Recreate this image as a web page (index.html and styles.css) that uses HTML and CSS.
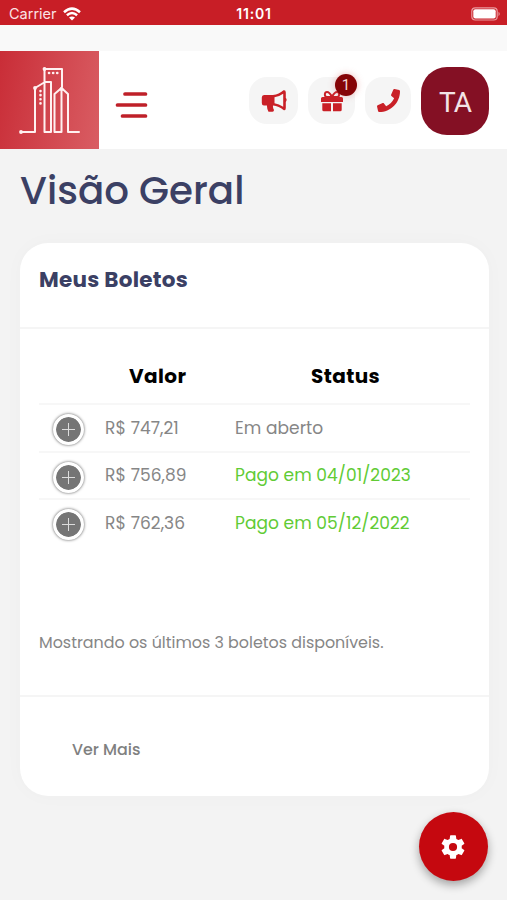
FILE: index.html
```html
<!DOCTYPE html>
<html lang="pt-BR">
<head>
<meta charset="utf-8">
<meta name="viewport" content="width=device-width, initial-scale=1">
<title>Visão Geral</title>
<link rel="stylesheet" href="styles.css">
</head>
<body>
<div class="status">
  <div class="carrier"><span>Carrier</span>
    <svg width="18" height="14" viewBox="0 0 18 14" fill="none" stroke="#fff" stroke-width="2.5"><path d="M1 5.2Q9-2 17 5.2M3.9 8.3Q9 3.8 14.1 8.3"/><path d="M9 13.6 6 10.6Q9 8.2 12 10.6Z" fill="#fff" stroke="none"/></svg>
  </div>
  <span class="clock">11:01</span>
  <svg class="battery" width="30" height="14" viewBox="0 0 30 14"><rect x=".8" y=".8" width="25.4" height="12.2" rx="3.5" fill="none" stroke="#e99a9e" stroke-width="1.2"/><rect x="2.3" y="2.3" width="22.4" height="9.2" rx="2" fill="#fff"/><path d="M27.5 4.8Q30 7 27.5 9.2Z" fill="#e99a9e"/></svg>
</div>
<header class="header">
  <div class="logo">
    <svg width="99" height="98" viewBox="0 0 99 98" fill="none" stroke="#fff1f1" stroke-width="2" stroke-linejoin="round" stroke-linecap="round"><path d="M21 81H35V37L45 31H51V81H44.500V18H62V36M54.500 81V43L61.500 37L68 43V81H79M54.500 81H61.500V38"/><path d="M49 22h10" stroke-width="2.600" stroke-dasharray=".1 4"/><path d="M40.500 40v14" stroke-width="2.600" stroke-dasharray=".1 4"/><g fill="#fff1f1" stroke="none"><circle cx="21" cy="81" r="1.900"/><circle cx="35" cy="37" r="1.900"/><circle cx="44.500" cy="18" r="1.900"/><circle cx="61.500" cy="38" r="1.900"/></g></svg>
  </div>
  <svg class="menu" width="34" height="28" viewBox="0 0 34 28" stroke="#bf2029" stroke-width="3.700" stroke-linecap="round"><path d="M10 3H30.500M2.500 14H30.500M7.500 25H30.500"/></svg>
  <nav class="tools">
    <button class="tool wide" aria-label="Avisos"><svg width="26" height="24" viewBox="0 0 26 24"><path fill="#c92027" fill-rule="evenodd" d="M3 6H12Q18 5.500 22.500 1.300Q24.800.8 24.800 3.500V9Q26.500 10.500 24.800 13V19Q24.800 21.800 22.500 21Q18 17 12 16.500Q11.700 19 13 21Q13 22.800 11.500 22.800H7.500Q5.800 19.500 6 16.500H3Q.8 16.500.8 14V8.500Q.8 6 3 6ZM13.500 8.200V14.200Q18 14.800 22.200 17.800V4.700Q18 7.700 13.500 8.200Z"/></svg></button>
    <button class="tool gift" aria-label="Benefícios"><svg width="22" height="22" viewBox="0 0 22 22"><path fill="none" stroke="#c92027" stroke-width="2" d="M11 7C9 3 7.500 2 6 2C3.500 2 3 6 5.500 7H16.500C19 6 18.500 2 16 2C14.500 2 13 3 11 7Z"/><path fill="#c92027" d="M1.500 7H20.500Q22 7 22 8.500V12H0V8.500Q0 7 1.500 7ZM1.300 13.300H10V21.200H2.800Q1.300 21.200 1.300 19.700ZM12 13.300H20.700V19.700Q20.700 21.200 19.200 21.200H12Z"/></svg><span class="badge">1</span></button>
    <button class="tool" aria-label="Telefone"><svg width="23" height="23" viewBox="0 0 512 512"><path fill="#c92027" d="M493.400 24.600l-104-24c-11.300-2.600-22.900 3.300-27.500 13.900l-48 112c-4.200 9.800-1.400 21.300 6.900 28l60.600 49.600c-36 76.700-98.900 140.500-177.200 177.200l-49.600-60.600c-6.800-8.300-18.200-11.100-28-6.900l-112 48C3.900 366.500-2 378.100.6 389.400l24 104C27.100 504.200 36.700 512 48 512c256.100 0 464-207.500 464-464 0-11.200-7.700-20.900-18.600-23.400z"/></svg></button>
    <div class="avatar">TA</div>
  </nav>
</header>
<main class="main">
  <h1 class="title">Visão Geral</h1>
  <section class="card">
    <div class="card-head"><h2>Meus Boletos</h2></div>
    <div class="card-body">
      <div class="row head"><span></span><span class="th">Valor</span><span class="th">Status</span></div>
      <div class="row"><span class="plus"></span><span>R$ 747,21</span><span>Em aberto</span></div>
      <div class="row"><span class="plus"></span><span>R$ 756,89</span><span class="paid">Pago em 04/01/2023</span></div>
      <div class="row"><span class="plus"></span><span>R$ 762,36</span><span class="paid">Pago em 05/12/2022</span></div>
      <p class="note">Mostrando os últimos 3 boletos disponíveis.</p>
    </div>
    <div class="card-foot"><span>Ver Mais</span></div>
  </section>
</main>
<button class="fab" aria-label="Configurações"><svg width="28" height="28" viewBox="0 0 24 24"><path fill="#fff" d="M19.430 12.980c.04-.32.07-.64.07-.98s-.03-.66-.07-.98l2.110-1.650c.19-.15.24-.42.12-.64l-2-3.460c-.12-.22-.39-.3-.61-.22l-2.490 1c-.52-.4-1.080-.73-1.690-.98l-.38-2.650C14.460 2.180 14.250 2 14 2h-4c-.25 0-.46.18-.49.42l-.38 2.650c-.61.25-1.170.59-1.690.98l-2.490-1c-.23-.09-.49 0-.61.22l-2 3.460c-.13.22-.07.49.12.64l2.110 1.650c-.04.32-.07.65-.07.98s.03.66.07.98l-2.110 1.650c-.19.15-.24.42-.12.64l2 3.460c.12.22.39.3.61.22l2.490-1c.52.4 1.080.73 1.690.98l.38 2.650c.03.24.24.42.49.42h4c.25 0 .46-.18.49-.42l.38-2.650c.61-.25 1.170-.59 1.690-.98l2.490 1c.23.09.49 0 .61-.22l2-3.460c.12-.22.07-.49-.12-.64l-2.110-1.650zM12 15.500a3.500 3.500 0 1 1 0-7 3.500 3.500 0 0 1 0 7z"/></svg></button>
</body>
</html>
```
FILE: styles.css
```css
* { box-sizing: border-box; }
body { margin: 0; height: 900px; overflow: hidden; background: #f3f3f3; color: #868686; font-family: Poppins, Inter, "Open Sans", sans-serif; font-size: 17px; }
h1, h2, p { margin: 0; }
button { border: 0; padding: 0; font: inherit; }
.status { display: grid; grid-template-columns: 1fr auto 1fr; align-items: center; height: 25px; padding: 2px 6px 0 9px; background: #c81e26; color: #fff; font: 14.500px Inter, sans-serif; }
.carrier { display: flex; align-items: center; gap: 6px; color: #fbe3e4; }
.clock { margin-right: 2px; font-weight: 600; font-size: 14px; letter-spacing: .8px; }
.battery { justify-self: end; }
.header { display: flex; height: 98px; margin-top: 26px; background: #fff; box-shadow: 0 -26px #f9f9f9; }
.logo { width: 99px; height: 98px; background: linear-gradient(100deg, #c92d37, #d95d63); }
.menu { margin: 40px 0 0 16px; }
.tools { display: flex; align-items: center; margin-left: auto; padding: 1px 18px 0 0; }
.tool { position: relative; display: flex; align-items: center; justify-content: center; width: 46px; height: 47px; margin-right: 10px; border-radius: 18px; background: #f5f5f5; }
.wide { width: 49px; }
.gift { width: 47px; }
.badge { position: absolute; left: 27px; top: -3px; width: 22px; height: 22px; border-radius: 50%; background: #850306; color: #f2d8d8; font: 15px/23px Roboto, sans-serif; box-shadow: 0 0 7px #d55a5a66; }
.avatar { width: 68px; height: 68px; border-radius: 26px; background: #841024; color: #f3e3e6; font: 28px/72px Roboto, sans-serif; letter-spacing: -1px; text-align: center; }
.main { padding: 0 18px 0 20px; }
.title { height: 94px; padding-top: 19px; color: #3b4064; font-size: 38.800px; line-height: 46px; font-weight: 500; white-space: nowrap; }
.card { height: 553px; border-radius: 28px; background: #fff; box-shadow: 0 0 20px #00000006; }
.card-head { height: 86px; padding: 22px 19px 0; border-bottom: 2px solid #f5f5f5; }
h2 { color: #3b4064; font-size: 21.500px; line-height: 30px; letter-spacing: .25px; }
.card-body { height: 368px; padding: 47px 19px 0; border-bottom: 2px solid #f5f5f5; }
.row { display: grid; grid-template-columns: 66px 130px 1fr; align-items: center; height: 47.500px; border-top: 2px solid #f7f7f7; white-space: nowrap; letter-spacing: .06px; }
.head { height: 27px; border: 0; align-items: start; line-height: 0; color: #000; font-weight: 700; font-size: 20px; letter-spacing: .4px; }
.th:nth-child(2) { padding-left: 24px; }
.th:nth-child(3) { padding-left: 76px; }
.paid { color: #61cb35; }
.plus { position: relative; top: 2px; justify-self: start; width: 31px; height: 31px; margin-left: 13.500px; border: 3px solid #fff; border-radius: 50%; box-shadow: 0 0 3px #555; background: linear-gradient(#ddd, #ddd) center / 13px 1px no-repeat, linear-gradient(#ddd, #ddd) center / 1px 13px no-repeat, #757575; background-clip: padding-box; }
.note { margin-top: 85px; font-size: 15.900px; line-height: 24px; white-space: nowrap; }
.card-foot { padding: 41px 52px; font-size: 15.900px; line-height: 24px; font-weight: 500; color: #808080; }
.fab { position: fixed; left: 418.500px; top: 812px; display: flex; align-items: center; justify-content: center; width: 69px; height: 69px; border-radius: 50%; background: #c5080f; box-shadow: 0 4px 10px #0005; }
```
